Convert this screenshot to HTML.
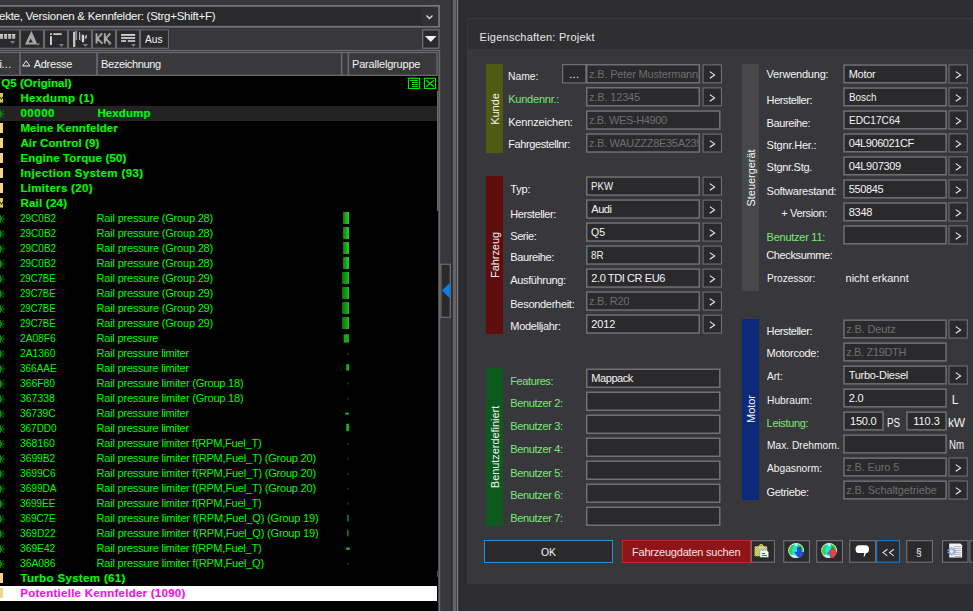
<!DOCTYPE html>
<html><head><meta charset="utf-8"><title>Eigenschaften: Projekt</title>
<style>
html,body{margin:0;padding:0}
body{width:973px;height:611px;position:relative;overflow:hidden;background:#2d2d30;font-family:"Liberation Sans",sans-serif;font-size:11px}
.a{position:absolute;white-space:nowrap}
.t{pointer-events:none}
svg{position:absolute;overflow:visible}
</style></head><body>

<div class="a" style="left:0px;top:0px;width:453px;height:611px;background:#38383c;"></div>
<svg class="a" style="left:0;top:0" width="973" height="611" viewBox="0 0 973 611"><rect x="451" y="0" width="1.8" height="611" fill="#2c2c2e"/><rect x="452.8" y="0" width="3.3" height="611" fill="#636365"/><rect x="456.1" y="0" width="0.7" height="611" fill="#3c3c3e"/><rect x="456.8" y="0" width="1.6" height="611" fill="#7a7a7c"/><rect x="458.4" y="0" width="9" height="611" fill="#2d2d30"/></svg>
<svg class="a" style="left:0;top:0" width="973" height="611" viewBox="0 0 973 611"><rect x="-2.10" y="5.90" width="441.20" height="20.80" fill="#2a2a2c" stroke="#747476" stroke-width="1.8"/></svg>
<div class="a" style="left:421px;top:7px;width:17px;height:19px;background:#303033;"></div>
<div class="a t" style="left:-1.0px;top:8px;color:#f4f4f4;font-size:11.5px;line-height:16px;letter-spacing:-0.258px;">ekte, Versionen &amp; Kennfelder: (Strg+Shift+F)</div>
<svg class="a" style="left:425px;top:13.7px" width="10" height="7"><path d="M1.5 1.5 L4.5 4.5 L7.5 1.5" stroke="#e0e0e0" stroke-width="1.3" fill="none"/></svg>
<svg class="a" style="left:0;top:0" width="973" height="611" viewBox="0 0 973 611"><rect x="-3.45" y="29.85" width="22.90" height="18.40" fill="#2a2a2c" stroke="#6a6a6c" stroke-width="1.1"/><rect x="20.55" y="29.85" width="22.90" height="18.40" fill="#2a2a2c" stroke="#6a6a6c" stroke-width="1.1"/><rect x="44.55" y="29.85" width="22.90" height="18.40" fill="#2a2a2c" stroke="#6a6a6c" stroke-width="1.1"/><rect x="68.55" y="29.85" width="22.90" height="18.40" fill="#2a2a2c" stroke="#6a6a6c" stroke-width="1.1"/><rect x="92.55" y="29.85" width="22.90" height="18.40" fill="#2a2a2c" stroke="#6a6a6c" stroke-width="1.1"/><rect x="116.55" y="29.85" width="22.90" height="18.40" fill="#2a2a2c" stroke="#6a6a6c" stroke-width="1.1"/><rect x="140.55" y="29.85" width="27.90" height="18.40" fill="#2a2a2c" stroke="#6a6a6c" stroke-width="1.1"/></svg>
<svg class="a" style="left:0;top:0" width="200" height="60"><rect x="0" y="34" width="3" height="4.8" fill="#b8b8b8"/><rect x="0" y="34" width="3" height="1.1" fill="#d6d6d6"/><rect x="4.1" y="34" width="3" height="4.8" fill="#b8b8b8"/><rect x="4.1" y="34" width="3" height="1.1" fill="#d6d6d6"/><rect x="8.2" y="34" width="3" height="4.8" fill="#b8b8b8"/><rect x="8.2" y="34" width="3" height="1.1" fill="#d6d6d6"/><rect x="12.2" y="34" width="3" height="4.8" fill="#b8b8b8"/><rect x="12.2" y="34" width="3" height="1.1" fill="#d6d6d6"/><path d="M10 41 H15.2 L12.6 44 Z" fill="#7c7c7e"/><path fill-rule="evenodd" d="M31.4 30.8 L37.4 44.6 H25 Z M30.6 38.6 L32.9 42.5 H28.5 Z" fill="#a8a8a8"/><path d="M36.2 43.2 H40 L38.1 46 Z" fill="#7c7c7e"/><rect x="50" y="33.3" width="1.9" height="1.6" fill="#d6d6d6"/><rect x="50" y="36.2" width="1.9" height="8.7" fill="#d6d6d6"/><rect x="53.3" y="33.3" width="8.5" height="1.6" fill="#d6d6d6"/><path d="M58.8 44 H64 L61.4 47 Z" fill="#7c7c7e"/><rect x="73" y="31.8" width="2.3" height="15.2" fill="#c4c4c4"/><rect x="75.3" y="31" width="1.8" height="9" fill="#8e8e90"/><rect x="79" y="32.2" width="1.1" height="7.8" fill="#b8b8b8"/><rect x="82" y="34.8" width="2.1" height="7.4" fill="#d6d6d6"/><path d="M80.2 33 L82 35 V42 L80.2 40 Z" fill="#555558"/><path d="M84.9 36.2 L87 34.6 V37.6 L84.9 39.4 Z" fill="#b8b8b8"/><path d="M82.6 44 H88.2 L85.4 47 Z" fill="#7c7c7e"/><path d="M96.5 33.3 V43.6 M102 33.3 L97.4 38.6 L102.5 43.6 M104.8 33.3 V43.6 M110.3 33.3 L105.7 38.6 L110.8 43.6" stroke="#a8a8a8" stroke-width="1.9" fill="none" stroke-linejoin="miter"/><path d="M107.4 43 H112 L109.7 45.6 Z" fill="#7c7c7e"/><rect x="121.1" y="34" width="14.1" height="1.8" fill="#d6d6d6"/><rect x="121.1" y="37.1" width="14.1" height="1.7" fill="#d6d6d6"/><rect x="121.1" y="40.2" width="4.9" height="1.6" fill="#d6d6d6"/><rect x="127.8" y="40.2" width="7.4" height="1.6" fill="#d6d6d6"/><path d="M130.8 44 H136 L133.4 47 Z" fill="#7c7c7e"/></svg>
<div class="a t" style="left:145.3px;top:31px;color:#f4f4f4;font-size:11px;line-height:16px;transform:scaleX(0.923);transform-origin:0 0;">Aus</div>
<svg class="a" style="left:0;top:0" width="973" height="611" viewBox="0 0 973 611"><rect x="422.70" y="29.90" width="16.30" height="18.30" fill="#2a2a2c" stroke="#747476" stroke-width="1.2"/></svg>
<svg class="a" style="left:424.9px;top:36px" width="12" height="7"><path d="M0 0 L11.5 0 L5.75 6.1 Z" fill="#f0f0f0"/></svg>
<svg class="a" style="left:0;top:0" width="973" height="611" viewBox="0 0 973 611"><rect x="-3" y="49.9" width="443.3" height="1.2" fill="#6e6e70"/><rect x="438.6" y="50.2" width="1.6" height="561" fill="#6a6a6c"/><rect x="-3" y="51.9" width="440.7" height="24" fill="#6c6c6e"/><rect x="-3" y="53.1" width="22.2" height="21.6" fill="#39393c"/><rect x="20.8" y="53.1" width="75.4" height="21.6" fill="#39393c"/><rect x="97.8" y="53.1" width="243" height="21.6" fill="#39393c"/><rect x="342.4" y="53.1" width="5.2" height="21.6" fill="#39393c"/><rect x="349.2" y="53.1" width="87.2" height="21.6" fill="#39393c"/></svg>
<div class="a t" style="left:-0.6px;top:56px;color:#f4f4f4;font-size:11px;line-height:16px;">i</div>
<div class="a t" style="left:1.4px;top:56px;color:#f4f4f4;font-size:11px;line-height:16px;letter-spacing:0.4px;">...</div>
<div class="a t" style="left:33.7px;top:56px;color:#f4f4f4;font-size:11px;line-height:16px;letter-spacing:-0.26px;">Adresse</div>
<div class="a t" style="left:101px;top:56px;color:#f4f4f4;font-size:11px;line-height:16px;letter-spacing:-0.341px;">Bezeichnung</div>
<div class="a t" style="left:352px;top:56px;color:#f4f4f4;font-size:11px;line-height:16px;letter-spacing:-0.188px;">Parallelgruppe</div>
<svg class="a" style="left:22px;top:60px" width="9" height="7"><path d="M4.2 0.8 L7.8 6 L0.6 6 Z" stroke="#f0f0f0" stroke-width="1" fill="none"/></svg>
<div class="a" style="left:0px;top:76px;width:438px;height:535px;background:#000;"></div>
<svg class="a" style="left:0;top:0" width="973" height="611" viewBox="0 0 973 611"><rect x="437" y="90.7" width="1.2" height="120.3" fill="#6e6e70"/><rect x="437" y="570.8" width="1.3" height="6.2" fill="#48484c"/></svg>
<div class="a t" style="left:1.2px;top:75px;color:#00fa00;font-size:11.5px;line-height:16px;font-weight:bold;-webkit-text-stroke:0.15px #00fa00;letter-spacing:0.07px;">Q5 (Original)</div>
<div class="a t" style="left:20.4px;top:90px;color:#00fa00;font-size:11.5px;line-height:16px;font-weight:bold;-webkit-text-stroke:0.15px #00fa00;letter-spacing:0.374px;">Hexdump (1)</div>
<svg class="a" style="left:0;top:93.3px" width="4" height="10"><rect x="0" y="0" width="3" height="9.6" fill="#dcc850"/><path d="M0 4 L1.5 6.5 L3 3.5" stroke="#222" stroke-width="1" fill="none"/></svg>
<div class="a" style="left:0px;top:106px;width:437px;height:14.7px;background:#232323;"></div>
<div class="a t" style="left:20.4px;top:105px;color:#00fa00;font-size:11.5px;line-height:16px;font-weight:bold;-webkit-text-stroke:0.15px #00fa00;letter-spacing:0.529px;">00000</div>
<div class="a t" style="left:97.4px;top:105px;color:#00fa00;font-size:11.5px;line-height:16px;font-weight:bold;-webkit-text-stroke:0.15px #00fa00;letter-spacing:0.116px;">Hexdump</div>
<svg class="a" style="left:0;top:109px" width="5" height="10"><path d="M0 5 H4.8 M0.5 5 L3.7 1.3 M0.5 5 L3.7 8.7 M0.4 1 V9" stroke="#128412" stroke-width="1" fill="none"/><rect x="0" y="3" width="1.6" height="4" fill="#128412"/></svg>
<div class="a t" style="left:20.4px;top:120px;color:#00fa00;font-size:11.5px;line-height:16px;font-weight:bold;-webkit-text-stroke:0.15px #00fa00;letter-spacing:0.103px;">Meine Kennfelder</div>
<div class="a" style="left:0px;top:123.3px;width:3px;height:9.6px;background:#f2d488;"></div>
<div class="a t" style="left:20.4px;top:135px;color:#00fa00;font-size:11.5px;line-height:16px;font-weight:bold;-webkit-text-stroke:0.15px #00fa00;letter-spacing:0.121px;">Air Control (9)</div>
<div class="a" style="left:0px;top:138.3px;width:3px;height:9.6px;background:#f2d488;"></div>
<div class="a t" style="left:20.4px;top:150px;color:#00fa00;font-size:11.5px;line-height:16px;font-weight:bold;-webkit-text-stroke:0.15px #00fa00;letter-spacing:0.159px;">Engine Torque (50)</div>
<div class="a" style="left:0px;top:153.3px;width:3px;height:9.6px;background:#f2d488;"></div>
<div class="a t" style="left:20.4px;top:165px;color:#00fa00;font-size:11.5px;line-height:16px;font-weight:bold;-webkit-text-stroke:0.15px #00fa00;letter-spacing:0.383px;">Injection System (93)</div>
<div class="a" style="left:0px;top:168.3px;width:3px;height:9.6px;background:#f2d488;"></div>
<div class="a t" style="left:20.4px;top:180px;color:#00fa00;font-size:11.5px;line-height:16px;font-weight:bold;-webkit-text-stroke:0.15px #00fa00;letter-spacing:0.309px;">Limiters (20)</div>
<div class="a" style="left:0px;top:183.3px;width:3px;height:9.6px;background:#f2d488;"></div>
<div class="a t" style="left:20.4px;top:195px;color:#00fa00;font-size:11.5px;line-height:16px;font-weight:bold;-webkit-text-stroke:0.15px #00fa00;letter-spacing:0.231px;">Rail (24)</div>
<svg class="a" style="left:0;top:198.3px" width="4" height="10"><rect x="0" y="0" width="3" height="9.6" fill="#dcc850"/><path d="M0 4 L1.5 6.5 L3 3.5" stroke="#222" stroke-width="1" fill="none"/></svg>
<div class="a t" style="left:20.4px;top:210px;color:#00fa00;font-size:11px;line-height:16px;transform:scaleX(0.908);transform-origin:0 0;">29C0B2</div>
<div class="a t" style="left:96.6px;top:210px;color:#00fa00;font-size:11px;line-height:16px;letter-spacing:-0.194px;">Rail pressure (Group 28)</div>
<svg class="a" style="left:0;top:214px" width="5" height="10"><path d="M0 5 H4.8 M0.5 5 L3.7 1.3 M0.5 5 L3.7 8.7 M0.4 1 V9" stroke="#128412" stroke-width="1" fill="none"/><rect x="0" y="3" width="1.6" height="4" fill="#128412"/></svg>
<div class="a t" style="left:20.4px;top:225px;color:#00fa00;font-size:11px;line-height:16px;transform:scaleX(0.908);transform-origin:0 0;">29C0B2</div>
<div class="a t" style="left:96.6px;top:225px;color:#00fa00;font-size:11px;line-height:16px;letter-spacing:-0.194px;">Rail pressure (Group 28)</div>
<svg class="a" style="left:0;top:229px" width="5" height="10"><path d="M0 5 H4.8 M0.5 5 L3.7 1.3 M0.5 5 L3.7 8.7 M0.4 1 V9" stroke="#128412" stroke-width="1" fill="none"/><rect x="0" y="3" width="1.6" height="4" fill="#128412"/></svg>
<div class="a t" style="left:20.4px;top:240px;color:#00fa00;font-size:11px;line-height:16px;transform:scaleX(0.908);transform-origin:0 0;">29C0B2</div>
<div class="a t" style="left:96.6px;top:240px;color:#00fa00;font-size:11px;line-height:16px;letter-spacing:-0.194px;">Rail pressure (Group 28)</div>
<svg class="a" style="left:0;top:244px" width="5" height="10"><path d="M0 5 H4.8 M0.5 5 L3.7 1.3 M0.5 5 L3.7 8.7 M0.4 1 V9" stroke="#128412" stroke-width="1" fill="none"/><rect x="0" y="3" width="1.6" height="4" fill="#128412"/></svg>
<div class="a t" style="left:20.4px;top:255px;color:#00fa00;font-size:11px;line-height:16px;transform:scaleX(0.908);transform-origin:0 0;">29C0B2</div>
<div class="a t" style="left:96.6px;top:255px;color:#00fa00;font-size:11px;line-height:16px;letter-spacing:-0.194px;">Rail pressure (Group 28)</div>
<svg class="a" style="left:0;top:259px" width="5" height="10"><path d="M0 5 H4.8 M0.5 5 L3.7 1.3 M0.5 5 L3.7 8.7 M0.4 1 V9" stroke="#128412" stroke-width="1" fill="none"/><rect x="0" y="3" width="1.6" height="4" fill="#128412"/></svg>
<div class="a t" style="left:20.4px;top:270px;color:#00fa00;font-size:11px;line-height:16px;transform:scaleX(0.869);transform-origin:0 0;">29C7BE</div>
<div class="a t" style="left:96.6px;top:270px;color:#00fa00;font-size:11px;line-height:16px;letter-spacing:-0.194px;">Rail pressure (Group 29)</div>
<svg class="a" style="left:0;top:274px" width="5" height="10"><path d="M0 5 H4.8 M0.5 5 L3.7 1.3 M0.5 5 L3.7 8.7 M0.4 1 V9" stroke="#128412" stroke-width="1" fill="none"/><rect x="0" y="3" width="1.6" height="4" fill="#128412"/></svg>
<div class="a t" style="left:20.4px;top:285px;color:#00fa00;font-size:11px;line-height:16px;transform:scaleX(0.869);transform-origin:0 0;">29C7BE</div>
<div class="a t" style="left:96.6px;top:285px;color:#00fa00;font-size:11px;line-height:16px;letter-spacing:-0.194px;">Rail pressure (Group 29)</div>
<svg class="a" style="left:0;top:289px" width="5" height="10"><path d="M0 5 H4.8 M0.5 5 L3.7 1.3 M0.5 5 L3.7 8.7 M0.4 1 V9" stroke="#128412" stroke-width="1" fill="none"/><rect x="0" y="3" width="1.6" height="4" fill="#128412"/></svg>
<div class="a t" style="left:20.4px;top:300px;color:#00fa00;font-size:11px;line-height:16px;transform:scaleX(0.869);transform-origin:0 0;">29C7BE</div>
<div class="a t" style="left:96.6px;top:300px;color:#00fa00;font-size:11px;line-height:16px;letter-spacing:-0.194px;">Rail pressure (Group 29)</div>
<svg class="a" style="left:0;top:304px" width="5" height="10"><path d="M0 5 H4.8 M0.5 5 L3.7 1.3 M0.5 5 L3.7 8.7 M0.4 1 V9" stroke="#128412" stroke-width="1" fill="none"/><rect x="0" y="3" width="1.6" height="4" fill="#128412"/></svg>
<div class="a t" style="left:20.4px;top:315px;color:#00fa00;font-size:11px;line-height:16px;transform:scaleX(0.869);transform-origin:0 0;">29C7BE</div>
<div class="a t" style="left:96.6px;top:315px;color:#00fa00;font-size:11px;line-height:16px;letter-spacing:-0.194px;">Rail pressure (Group 29)</div>
<svg class="a" style="left:0;top:319px" width="5" height="10"><path d="M0 5 H4.8 M0.5 5 L3.7 1.3 M0.5 5 L3.7 8.7 M0.4 1 V9" stroke="#128412" stroke-width="1" fill="none"/><rect x="0" y="3" width="1.6" height="4" fill="#128412"/></svg>
<div class="a t" style="left:20.4px;top:330px;color:#00fa00;font-size:11px;line-height:16px;transform:scaleX(0.924);transform-origin:0 0;">2A08F6</div>
<div class="a t" style="left:96.6px;top:330px;color:#00fa00;font-size:11px;line-height:16px;letter-spacing:-0.243px;">Rail pressure</div>
<svg class="a" style="left:0;top:334px" width="5" height="10"><path d="M0 5 H4.8 M0.5 5 L3.7 1.3 M0.5 5 L3.7 8.7 M0.4 1 V9" stroke="#128412" stroke-width="1" fill="none"/><rect x="0" y="3" width="1.6" height="4" fill="#128412"/></svg>
<div class="a t" style="left:20.4px;top:345px;color:#00fa00;font-size:11px;line-height:16px;transform:scaleX(0.938);transform-origin:0 0;">2A1360</div>
<div class="a t" style="left:96.6px;top:345px;color:#00fa00;font-size:11px;line-height:16px;letter-spacing:-0.235px;">Rail pressure limiter</div>
<svg class="a" style="left:0;top:349px" width="5" height="10"><path d="M0 5 H4.8 M0.5 5 L3.7 1.3 M0.5 5 L3.7 8.7 M0.4 1 V9" stroke="#128412" stroke-width="1" fill="none"/><rect x="0" y="3" width="1.6" height="4" fill="#128412"/></svg>
<div class="a t" style="left:20.4px;top:360px;color:#00fa00;font-size:11px;line-height:16px;transform:scaleX(0.907);transform-origin:0 0;">366AAE</div>
<div class="a t" style="left:96.6px;top:360px;color:#00fa00;font-size:11px;line-height:16px;letter-spacing:-0.235px;">Rail pressure limiter</div>
<svg class="a" style="left:0;top:364px" width="5" height="10"><path d="M0 5 H4.8 M0.5 5 L3.7 1.3 M0.5 5 L3.7 8.7 M0.4 1 V9" stroke="#128412" stroke-width="1" fill="none"/><rect x="0" y="3" width="1.6" height="4" fill="#128412"/></svg>
<div class="a t" style="left:20.4px;top:375px;color:#00fa00;font-size:11px;line-height:16px;transform:scaleX(0.935);transform-origin:0 0;">366F80</div>
<div class="a t" style="left:96.6px;top:375px;color:#00fa00;font-size:11px;line-height:16px;letter-spacing:-0.208px;">Rail pressure limiter (Group 18)</div>
<svg class="a" style="left:0;top:379px" width="5" height="10"><path d="M0 5 H4.8 M0.5 5 L3.7 1.3 M0.5 5 L3.7 8.7 M0.4 1 V9" stroke="#128412" stroke-width="1" fill="none"/><rect x="0" y="3" width="1.6" height="4" fill="#128412"/></svg>
<div class="a t" style="left:20.4px;top:390px;color:#00fa00;font-size:11px;line-height:16px;transform:scaleX(0.950);transform-origin:0 0;">367338</div>
<div class="a t" style="left:96.6px;top:390px;color:#00fa00;font-size:11px;line-height:16px;letter-spacing:-0.208px;">Rail pressure limiter (Group 18)</div>
<svg class="a" style="left:0;top:394px" width="5" height="10"><path d="M0 5 H4.8 M0.5 5 L3.7 1.3 M0.5 5 L3.7 8.7 M0.4 1 V9" stroke="#128412" stroke-width="1" fill="none"/><rect x="0" y="3" width="1.6" height="4" fill="#128412"/></svg>
<div class="a t" style="left:20.4px;top:405px;color:#00fa00;font-size:11px;line-height:16px;transform:scaleX(0.924);transform-origin:0 0;">36739C</div>
<div class="a t" style="left:96.6px;top:405px;color:#00fa00;font-size:11px;line-height:16px;letter-spacing:-0.235px;">Rail pressure limiter</div>
<svg class="a" style="left:0;top:409px" width="5" height="10"><path d="M0 5 H4.8 M0.5 5 L3.7 1.3 M0.5 5 L3.7 8.7 M0.4 1 V9" stroke="#128412" stroke-width="1" fill="none"/><rect x="0" y="3" width="1.6" height="4" fill="#128412"/></svg>
<div class="a t" style="left:20.4px;top:420px;color:#00fa00;font-size:11px;line-height:16px;transform:scaleX(0.907);transform-origin:0 0;">367DD0</div>
<div class="a t" style="left:96.6px;top:420px;color:#00fa00;font-size:11px;line-height:16px;letter-spacing:-0.235px;">Rail pressure limiter</div>
<svg class="a" style="left:0;top:424px" width="5" height="10"><path d="M0 5 H4.8 M0.5 5 L3.7 1.3 M0.5 5 L3.7 8.7 M0.4 1 V9" stroke="#128412" stroke-width="1" fill="none"/><rect x="0" y="3" width="1.6" height="4" fill="#128412"/></svg>
<div class="a t" style="left:20.4px;top:435px;color:#00fa00;font-size:11px;line-height:16px;transform:scaleX(0.950);transform-origin:0 0;">368160</div>
<div class="a t" style="left:96.6px;top:435px;color:#00fa00;font-size:11px;line-height:16px;letter-spacing:-0.217px;">Rail pressure limiter f(RPM,Fuel_T)</div>
<svg class="a" style="left:0;top:439px" width="5" height="10"><path d="M0 5 H4.8 M0.5 5 L3.7 1.3 M0.5 5 L3.7 8.7 M0.4 1 V9" stroke="#128412" stroke-width="1" fill="none"/><rect x="0" y="3" width="1.6" height="4" fill="#128412"/></svg>
<div class="a t" style="left:20.4px;top:450px;color:#00fa00;font-size:11px;line-height:16px;transform:scaleX(0.930);transform-origin:0 0;">3699B2</div>
<div class="a t" style="left:96.6px;top:450px;color:#00fa00;font-size:11px;line-height:16px;letter-spacing:-0.203px;">Rail pressure limiter f(RPM,Fuel_T) (Group 20)</div>
<svg class="a" style="left:0;top:454px" width="5" height="10"><path d="M0 5 H4.8 M0.5 5 L3.7 1.3 M0.5 5 L3.7 8.7 M0.4 1 V9" stroke="#128412" stroke-width="1" fill="none"/><rect x="0" y="3" width="1.6" height="4" fill="#128412"/></svg>
<div class="a t" style="left:20.4px;top:465px;color:#00fa00;font-size:11px;line-height:16px;transform:scaleX(0.924);transform-origin:0 0;">3699C6</div>
<div class="a t" style="left:96.6px;top:465px;color:#00fa00;font-size:11px;line-height:16px;letter-spacing:-0.203px;">Rail pressure limiter f(RPM,Fuel_T) (Group 20)</div>
<svg class="a" style="left:0;top:469px" width="5" height="10"><path d="M0 5 H4.8 M0.5 5 L3.7 1.3 M0.5 5 L3.7 8.7 M0.4 1 V9" stroke="#128412" stroke-width="1" fill="none"/><rect x="0" y="3" width="1.6" height="4" fill="#128412"/></svg>
<div class="a t" style="left:20.4px;top:480px;color:#00fa00;font-size:11px;line-height:16px;transform:scaleX(0.920);transform-origin:0 0;">3699DA</div>
<div class="a t" style="left:96.6px;top:480px;color:#00fa00;font-size:11px;line-height:16px;letter-spacing:-0.203px;">Rail pressure limiter f(RPM,Fuel_T) (Group 20)</div>
<svg class="a" style="left:0;top:484px" width="5" height="10"><path d="M0 5 H4.8 M0.5 5 L3.7 1.3 M0.5 5 L3.7 8.7 M0.4 1 V9" stroke="#128412" stroke-width="1" fill="none"/><rect x="0" y="3" width="1.6" height="4" fill="#128412"/></svg>
<div class="a t" style="left:20.4px;top:495px;color:#00fa00;font-size:11px;line-height:16px;transform:scaleX(0.902);transform-origin:0 0;">3699EE</div>
<div class="a t" style="left:96.6px;top:495px;color:#00fa00;font-size:11px;line-height:16px;letter-spacing:-0.217px;">Rail pressure limiter f(RPM,Fuel_T)</div>
<svg class="a" style="left:0;top:499px" width="5" height="10"><path d="M0 5 H4.8 M0.5 5 L3.7 1.3 M0.5 5 L3.7 8.7 M0.4 1 V9" stroke="#128412" stroke-width="1" fill="none"/><rect x="0" y="3" width="1.6" height="4" fill="#128412"/></svg>
<div class="a t" style="left:20.4px;top:510px;color:#00fa00;font-size:11px;line-height:16px;transform:scaleX(0.895);transform-origin:0 0;">369C7E</div>
<div class="a t" style="left:96.6px;top:510px;color:#00fa00;font-size:11px;line-height:16px;letter-spacing:-0.188px;">Rail pressure limiter f(RPM,Fuel_Q) (Group 19)</div>
<svg class="a" style="left:0;top:514px" width="5" height="10"><path d="M0 5 H4.8 M0.5 5 L3.7 1.3 M0.5 5 L3.7 8.7 M0.4 1 V9" stroke="#128412" stroke-width="1" fill="none"/><rect x="0" y="3" width="1.6" height="4" fill="#128412"/></svg>
<div class="a t" style="left:20.4px;top:525px;color:#00fa00;font-size:11px;line-height:16px;transform:scaleX(0.924);transform-origin:0 0;">369D22</div>
<div class="a t" style="left:96.6px;top:525px;color:#00fa00;font-size:11px;line-height:16px;letter-spacing:-0.188px;">Rail pressure limiter f(RPM,Fuel_Q) (Group 19)</div>
<svg class="a" style="left:0;top:529px" width="5" height="10"><path d="M0 5 H4.8 M0.5 5 L3.7 1.3 M0.5 5 L3.7 8.7 M0.4 1 V9" stroke="#128412" stroke-width="1" fill="none"/><rect x="0" y="3" width="1.6" height="4" fill="#128412"/></svg>
<div class="a t" style="left:20.4px;top:540px;color:#00fa00;font-size:11px;line-height:16px;transform:scaleX(0.930);transform-origin:0 0;">369E42</div>
<div class="a t" style="left:96.6px;top:540px;color:#00fa00;font-size:11px;line-height:16px;letter-spacing:-0.217px;">Rail pressure limiter f(RPM,Fuel_T)</div>
<svg class="a" style="left:0;top:544px" width="5" height="10"><path d="M0 5 H4.8 M0.5 5 L3.7 1.3 M0.5 5 L3.7 8.7 M0.4 1 V9" stroke="#128412" stroke-width="1" fill="none"/><rect x="0" y="3" width="1.6" height="4" fill="#128412"/></svg>
<div class="a t" style="left:20.4px;top:555px;color:#00fa00;font-size:11px;line-height:16px;transform:scaleX(0.938);transform-origin:0 0;">36A086</div>
<div class="a t" style="left:96.6px;top:555px;color:#00fa00;font-size:11px;line-height:16px;letter-spacing:-0.197px;">Rail pressure limiter f(RPM,Fuel_Q)</div>
<svg class="a" style="left:0;top:559px" width="5" height="10"><path d="M0 5 H4.8 M0.5 5 L3.7 1.3 M0.5 5 L3.7 8.7 M0.4 1 V9" stroke="#128412" stroke-width="1" fill="none"/><rect x="0" y="3" width="1.6" height="4" fill="#128412"/></svg>
<div class="a t" style="left:20.4px;top:570px;color:#00fa00;font-size:11.5px;line-height:16px;font-weight:bold;-webkit-text-stroke:0.15px #00fa00;letter-spacing:0.345px;">Turbo System (61)</div>
<div class="a" style="left:0px;top:573.3px;width:3px;height:9.6px;background:#f2d488;"></div>
<div class="a" style="left:0px;top:586px;width:437px;height:14.8px;background:#ffffff;"></div>
<div class="a t" style="left:20.3px;top:585px;color:#fa0cf0;font-size:11.5px;line-height:16px;font-weight:bold;-webkit-text-stroke:0.15px #fa0cf0;letter-spacing:0.255px;">Potentielle Kennfelder (1090)</div>
<div class="a" style="left:0px;top:588.3px;width:3px;height:9.6px;background:#f2d488;"></div>
<svg class="a" style="left:0;top:0" width="440" height="92"><rect x="408.5" y="78.3" width="11.1" height="10.2" fill="none" stroke="#00ea00" stroke-width="1.1"/><path d="M409.9 80.55 H418 M412 82.55 H418 M412 84.5 H418 M412 86.45 H418" stroke="#00ea00" stroke-width="1"/><rect x="424.45" y="78.3" width="11.1" height="10.2" fill="none" stroke="#00ea00" stroke-width="1.1"/><path d="M426.2 80.3 L433.9 86.7 M433.9 80.3 L426.2 86.7" stroke="#00ea00" stroke-width="1.3"/></svg>
<div class="a" style="left:343px;top:212px;width:6px;height:12px;background:linear-gradient(to right,#0c7c0c,#22d422);"></div>
<div class="a" style="left:343px;top:227px;width:6px;height:12px;background:linear-gradient(to right,#0c7c0c,#22d422);"></div>
<div class="a" style="left:343px;top:242px;width:6px;height:12px;background:linear-gradient(to right,#0c7c0c,#22d422);"></div>
<div class="a" style="left:343px;top:257px;width:6px;height:12px;background:linear-gradient(to right,#0c7c0c,#22d422);"></div>
<div class="a" style="left:341.8px;top:272px;width:7.2px;height:12px;background:linear-gradient(to right,#0a6c0a,#1cbc1c);"></div>
<div class="a" style="left:341.8px;top:287px;width:7.2px;height:12px;background:linear-gradient(to right,#0a6c0a,#1cbc1c);"></div>
<div class="a" style="left:341.8px;top:302px;width:7.2px;height:12px;background:linear-gradient(to right,#0a6c0a,#1cbc1c);"></div>
<div class="a" style="left:341.8px;top:317px;width:7.2px;height:12px;background:linear-gradient(to right,#0a6c0a,#1cbc1c);"></div>
<svg class="a" style="left:0;top:0" width="973" height="611" viewBox="0 0 973 611"><rect x="343.7" y="334.3" width="5.3" height="8.3" fill="#17a817"/><rect x="347.4" y="353" width="1" height="2" fill="#1ec81e" opacity="0.55"/><rect x="346.2" y="364.3" width="3" height="6.3" fill="#1ec81e" opacity="0.85"/><rect x="347.4" y="382.4" width="1" height="2" fill="#1ec81e" opacity="0.55"/><rect x="347.4" y="397.7" width="1" height="2" fill="#1ec81e" opacity="0.55"/><rect x="345" y="412.7" width="4.2" height="1.9" fill="#1ec81e" opacity="0.85"/><rect x="346.2" y="423.7" width="3" height="7.4" fill="#1ec81e" opacity="0.85"/><rect x="347.4" y="443" width="1" height="2" fill="#1ec81e" opacity="0.55"/><rect x="347.4" y="457.8" width="1" height="2" fill="#1ec81e" opacity="0.55"/><rect x="347.4" y="472.8" width="1" height="2" fill="#1ec81e" opacity="0.55"/><rect x="347.4" y="487.7" width="1" height="2" fill="#1ec81e" opacity="0.55"/><rect x="347.4" y="502.6" width="1" height="2" fill="#1ec81e" opacity="0.55"/><rect x="347.3" y="514.8" width="1.2" height="6.7" fill="#1ec81e" opacity="0.85"/><rect x="347.3" y="529.7" width="1.2" height="6.7" fill="#1ec81e" opacity="0.85"/><rect x="346.2" y="547.4" width="3.5" height="2.6" fill="#1ec81e" opacity="0.85"/><rect x="347.4" y="562.7" width="1" height="2" fill="#1ec81e" opacity="0.55"/></svg>
<svg class="a" style="left:0;top:0" width="973" height="611" viewBox="0 0 973 611"><rect x="440.95" y="264.25" width="9.30" height="53.00" fill="#2a2a2c" stroke="#747476" stroke-width="1.1"/></svg>
<svg class="a" style="left:0;top:0" width="460" height="320"><path d="M449.9 282.7 L449.9 298.3 L441.8 290.5 Z" fill="#0a80e6"/></svg>
<div class="a" style="left:467px;top:18px;width:506px;height:566px;background:#38383c;"></div>
<div class="a" style="left:467px;top:18px;width:506px;height:30.8px;background:#2f2f32;"></div>
<div class="a" style="left:467px;top:18px;width:506px;height:1px;background:#3a3a3e;"></div>
<div class="a" style="left:467px;top:18px;width:1px;height:565px;background:#38383c;"></div>
<div class="a t" style="left:479.6px;top:29px;color:#e8e8e8;font-size:11px;line-height:16px;letter-spacing:0.234px;">Eigenschaften: Projekt</div>
<div class="a" style="left:486px;top:64px;width:17px;height:89px;background:#505a12;"></div>
<div class="a t" style="left:494.5px;top:108.5px;width:0;height:0;"><div class="a" style="transform:translate(-50%,-50%) rotate(-90deg);color:#f4f4f4;font-size:11px;line-height:12px;letter-spacing:-0.05px;left:0.6px;top:0">Kunde</div></div>
<svg class="a" style="left:0;top:0" width="973" height="611" viewBox="0 0 973 611"><rect x="562.60" y="64.60" width="23.30" height="18.30" fill="#2a2a2c" stroke="#707072" stroke-width="1.2"/></svg>
<div class="a t" style="left:569.3px;top:66px;color:#f4f4f4;font-size:11px;line-height:16px;letter-spacing:0.25px;">...</div>
<svg class="a" style="left:0;top:0" width="973" height="611" viewBox="0 0 973 611"><rect x="586.75" y="64.75" width="112.50" height="18.00" fill="#2a2a2c" stroke="#707072" stroke-width="1.5"/></svg>
<div class="a t" style="left:589px;top:66px;color:#6e6e70;font-size:11px;line-height:16px;letter-spacing:-0.165px;max-width:109.4px;overflow:hidden;">z.B. Peter Mustermann</div>
<svg class="a" style="left:0;top:0" width="973" height="611" viewBox="0 0 973 611"><rect x="703.05" y="64.85" width="18.40" height="17.90" fill="#2a2a2c" stroke="#707072" stroke-width="1.1"/></svg>
<svg class="a" style="left:709.25px;top:70.5px" width="7" height="9"><path d="M0.8 0.6 L5.6 3.9 L0.8 7.2" stroke="#f0f0f0" stroke-width="1.1" fill="none"/></svg>
<svg class="a" style="left:0;top:0" width="973" height="611" viewBox="0 0 973 611"><rect x="586.75" y="87.75" width="112.50" height="18.00" fill="#2a2a2c" stroke="#707072" stroke-width="1.5"/></svg>
<div class="a t" style="left:589px;top:89px;color:#6e6e70;font-size:11px;line-height:16px;letter-spacing:-0.155px;max-width:109.4px;overflow:hidden;">z.B. 12345</div>
<svg class="a" style="left:0;top:0" width="973" height="611" viewBox="0 0 973 611"><rect x="703.05" y="87.85" width="18.40" height="17.90" fill="#2a2a2c" stroke="#707072" stroke-width="1.1"/></svg>
<svg class="a" style="left:709.25px;top:93.5px" width="7" height="9"><path d="M0.8 0.6 L5.6 3.9 L0.8 7.2" stroke="#f0f0f0" stroke-width="1.1" fill="none"/></svg>
<svg class="a" style="left:0;top:0" width="973" height="611" viewBox="0 0 973 611"><rect x="586.75" y="111.05" width="133.00" height="18.00" fill="#2a2a2c" stroke="#707072" stroke-width="1.5"/></svg>
<div class="a t" style="left:589px;top:112px;color:#6e6e70;font-size:11px;line-height:16px;letter-spacing:-0.38px;max-width:129.9px;overflow:hidden;">z.B. WES-H4900</div>
<svg class="a" style="left:0;top:0" width="973" height="611" viewBox="0 0 973 611"><rect x="586.75" y="134.05" width="112.50" height="18.00" fill="#2a2a2c" stroke="#707072" stroke-width="1.5"/></svg>
<div class="a t" style="left:589px;top:135px;color:#6e6e70;font-size:11px;line-height:16px;letter-spacing:-0.295px;max-width:109.4px;overflow:hidden;">z.B. WAUZZZ8E35A235</div>
<svg class="a" style="left:0;top:0" width="973" height="611" viewBox="0 0 973 611"><rect x="703.05" y="134.15" width="18.40" height="17.90" fill="#2a2a2c" stroke="#707072" stroke-width="1.1"/></svg>
<svg class="a" style="left:709.25px;top:139.79999999999998px" width="7" height="9"><path d="M0.8 0.6 L5.6 3.9 L0.8 7.2" stroke="#f0f0f0" stroke-width="1.1" fill="none"/></svg>
<div class="a t" style="left:508.2px;top:68px;color:#f4f4f4;font-size:11px;line-height:16px;transform:scaleX(0.941);transform-origin:0 0;">Name:</div>
<div class="a t" style="left:508.2px;top:91px;color:#76ea76;font-size:11px;line-height:16px;letter-spacing:-0.224px;">Kundennr.:</div>
<div class="a t" style="left:508.2px;top:114px;color:#f4f4f4;font-size:11px;line-height:16px;letter-spacing:-0.179px;">Kennzeichen:</div>
<div class="a t" style="left:508.2px;top:136px;color:#f4f4f4;font-size:11px;line-height:16px;letter-spacing:-0.39px;">Fahrgestellnr:</div>
<div class="a" style="left:486px;top:176px;width:17px;height:158px;background:#5e0c0e;"></div>
<div class="a t" style="left:494.5px;top:255.0px;width:0;height:0;"><div class="a" style="transform:translate(-50%,-50%) rotate(-90deg);color:#f4f4f4;font-size:11px;line-height:12px;letter-spacing:-0.05px;left:0.6px;top:0">Fahrzeug</div></div>
<svg class="a" style="left:0;top:0" width="973" height="611" viewBox="0 0 973 611"><rect x="586.75" y="177.05" width="112.50" height="18.00" fill="#2a2a2c" stroke="#707072" stroke-width="1.5"/></svg>
<div class="a t" style="left:591.3px;top:178px;color:#f4f4f4;font-size:11px;line-height:16px;transform:scaleX(0.878);transform-origin:0 0;">PKW</div>
<svg class="a" style="left:0;top:0" width="973" height="611" viewBox="0 0 973 611"><rect x="703.05" y="177.15" width="18.40" height="17.90" fill="#2a2a2c" stroke="#707072" stroke-width="1.1"/></svg>
<svg class="a" style="left:709.25px;top:182.8px" width="7" height="9"><path d="M0.8 0.6 L5.6 3.9 L0.8 7.2" stroke="#f0f0f0" stroke-width="1.1" fill="none"/></svg>
<div class="a t" style="left:510.3px;top:181px;color:#f4f4f4;font-size:11px;line-height:16px;letter-spacing:-0.199px;">Typ:</div>
<svg class="a" style="left:0;top:0" width="973" height="611" viewBox="0 0 973 611"><rect x="586.75" y="200.05" width="112.50" height="18.00" fill="#2a2a2c" stroke="#707072" stroke-width="1.5"/></svg>
<div class="a t" style="left:591.3px;top:201px;color:#f4f4f4;font-size:11px;line-height:16px;letter-spacing:-0.444px;">Audi</div>
<svg class="a" style="left:0;top:0" width="973" height="611" viewBox="0 0 973 611"><rect x="703.05" y="200.15" width="18.40" height="17.90" fill="#2a2a2c" stroke="#707072" stroke-width="1.1"/></svg>
<svg class="a" style="left:709.25px;top:205.8px" width="7" height="9"><path d="M0.8 0.6 L5.6 3.9 L0.8 7.2" stroke="#f0f0f0" stroke-width="1.1" fill="none"/></svg>
<div class="a t" style="left:510.3px;top:206px;color:#f4f4f4;font-size:11px;line-height:16px;letter-spacing:-0.412px;">Hersteller:</div>
<svg class="a" style="left:0;top:0" width="973" height="611" viewBox="0 0 973 611"><rect x="586.75" y="223.05" width="112.50" height="18.00" fill="#2a2a2c" stroke="#707072" stroke-width="1.5"/></svg>
<div class="a t" style="left:591.3px;top:224px;color:#f4f4f4;font-size:11px;line-height:16px;transform:scaleX(0.953);transform-origin:0 0;">Q5</div>
<svg class="a" style="left:0;top:0" width="973" height="611" viewBox="0 0 973 611"><rect x="703.05" y="223.15" width="18.40" height="17.90" fill="#2a2a2c" stroke="#707072" stroke-width="1.1"/></svg>
<svg class="a" style="left:709.25px;top:228.8px" width="7" height="9"><path d="M0.8 0.6 L5.6 3.9 L0.8 7.2" stroke="#f0f0f0" stroke-width="1.1" fill="none"/></svg>
<div class="a t" style="left:510.3px;top:228px;color:#f4f4f4;font-size:11px;line-height:16px;letter-spacing:-0.45px;">Serie:</div>
<svg class="a" style="left:0;top:0" width="973" height="611" viewBox="0 0 973 611"><rect x="586.75" y="246.05" width="112.50" height="18.00" fill="#2a2a2c" stroke="#707072" stroke-width="1.5"/></svg>
<div class="a t" style="left:591.3px;top:247px;color:#f4f4f4;font-size:11px;line-height:16px;transform:scaleX(0.889);transform-origin:0 0;">8R</div>
<svg class="a" style="left:0;top:0" width="973" height="611" viewBox="0 0 973 611"><rect x="703.05" y="246.15" width="18.40" height="17.90" fill="#2a2a2c" stroke="#707072" stroke-width="1.1"/></svg>
<svg class="a" style="left:709.25px;top:251.8px" width="7" height="9"><path d="M0.8 0.6 L5.6 3.9 L0.8 7.2" stroke="#f0f0f0" stroke-width="1.1" fill="none"/></svg>
<div class="a t" style="left:510.3px;top:249px;color:#f4f4f4;font-size:11px;line-height:16px;letter-spacing:-0.387px;">Baureihe:</div>
<svg class="a" style="left:0;top:0" width="973" height="611" viewBox="0 0 973 611"><rect x="586.75" y="269.05" width="112.50" height="18.00" fill="#2a2a2c" stroke="#707072" stroke-width="1.5"/></svg>
<div class="a t" style="left:591.3px;top:270px;color:#f4f4f4;font-size:11px;line-height:16px;letter-spacing:-0.406px;">2.0 TDI CR EU6</div>
<svg class="a" style="left:0;top:0" width="973" height="611" viewBox="0 0 973 611"><rect x="703.05" y="269.15" width="18.40" height="17.90" fill="#2a2a2c" stroke="#707072" stroke-width="1.1"/></svg>
<svg class="a" style="left:709.25px;top:274.8px" width="7" height="9"><path d="M0.8 0.6 L5.6 3.9 L0.8 7.2" stroke="#f0f0f0" stroke-width="1.1" fill="none"/></svg>
<div class="a t" style="left:510.3px;top:272px;color:#f4f4f4;font-size:11px;line-height:16px;letter-spacing:-0.363px;">Ausführung:</div>
<svg class="a" style="left:0;top:0" width="973" height="611" viewBox="0 0 973 611"><rect x="586.75" y="292.05" width="112.50" height="18.00" fill="#2a2a2c" stroke="#707072" stroke-width="1.5"/></svg>
<div class="a t" style="left:589px;top:293px;color:#6e6e70;font-size:11px;line-height:16px;letter-spacing:-0.241px;max-width:109.4px;overflow:hidden;">z.B. R20</div>
<svg class="a" style="left:0;top:0" width="973" height="611" viewBox="0 0 973 611"><rect x="703.05" y="292.15" width="18.40" height="17.90" fill="#2a2a2c" stroke="#707072" stroke-width="1.1"/></svg>
<svg class="a" style="left:709.25px;top:297.8px" width="7" height="9"><path d="M0.8 0.6 L5.6 3.9 L0.8 7.2" stroke="#f0f0f0" stroke-width="1.1" fill="none"/></svg>
<div class="a t" style="left:510.3px;top:296px;color:#f4f4f4;font-size:11px;line-height:16px;letter-spacing:-0.291px;">Besonderheit:</div>
<svg class="a" style="left:0;top:0" width="973" height="611" viewBox="0 0 973 611"><rect x="586.75" y="315.05" width="112.50" height="18.00" fill="#2a2a2c" stroke="#707072" stroke-width="1.5"/></svg>
<div class="a t" style="left:591.3px;top:316px;color:#f4f4f4;font-size:11px;line-height:16px;letter-spacing:-0.161px;">2012</div>
<svg class="a" style="left:0;top:0" width="973" height="611" viewBox="0 0 973 611"><rect x="703.05" y="315.15" width="18.40" height="17.90" fill="#2a2a2c" stroke="#707072" stroke-width="1.1"/></svg>
<svg class="a" style="left:709.25px;top:320.8px" width="7" height="9"><path d="M0.8 0.6 L5.6 3.9 L0.8 7.2" stroke="#f0f0f0" stroke-width="1.1" fill="none"/></svg>
<div class="a t" style="left:510.3px;top:318px;color:#f4f4f4;font-size:11px;line-height:16px;letter-spacing:-0.311px;">Modelljahr:</div>
<div class="a" style="left:486px;top:368.3px;width:17px;height:157.7px;background:#0e5a1e;"></div>
<div class="a t" style="left:494.5px;top:447.15px;width:0;height:0;"><div class="a" style="transform:translate(-50%,-50%) rotate(-90deg);color:#f4f4f4;font-size:11px;line-height:12px;letter-spacing:-0.05px;left:0.6px;top:0">Benutzerdefiniert</div></div>
<svg class="a" style="left:0;top:0" width="973" height="611" viewBox="0 0 973 611"><rect x="586.75" y="369.25" width="133.00" height="18.00" fill="#2a2a2c" stroke="#707072" stroke-width="1.5"/></svg>
<div class="a t" style="left:591.3px;top:370px;color:#f4f4f4;font-size:11px;line-height:16px;letter-spacing:-0.44px;">Mappack</div>
<div class="a t" style="left:510.3px;top:373px;color:#76ea76;font-size:11px;line-height:16px;letter-spacing:-0.409px;">Features:</div>
<svg class="a" style="left:0;top:0" width="973" height="611" viewBox="0 0 973 611"><rect x="586.75" y="392.25" width="133.00" height="18.00" fill="#2a2a2c" stroke="#707072" stroke-width="1.5"/></svg>
<div class="a t" style="left:510.3px;top:395px;color:#76ea76;font-size:11px;line-height:16px;letter-spacing:-0.357px;">Benutzer 2:</div>
<svg class="a" style="left:0;top:0" width="973" height="611" viewBox="0 0 973 611"><rect x="586.75" y="415.25" width="133.00" height="18.00" fill="#2a2a2c" stroke="#707072" stroke-width="1.5"/></svg>
<div class="a t" style="left:510.3px;top:418px;color:#76ea76;font-size:11px;line-height:16px;letter-spacing:-0.357px;">Benutzer 3:</div>
<svg class="a" style="left:0;top:0" width="973" height="611" viewBox="0 0 973 611"><rect x="586.75" y="438.25" width="133.00" height="18.00" fill="#2a2a2c" stroke="#707072" stroke-width="1.5"/></svg>
<div class="a t" style="left:510.3px;top:441px;color:#76ea76;font-size:11px;line-height:16px;letter-spacing:-0.357px;">Benutzer 4:</div>
<svg class="a" style="left:0;top:0" width="973" height="611" viewBox="0 0 973 611"><rect x="586.75" y="461.25" width="133.00" height="18.00" fill="#2a2a2c" stroke="#707072" stroke-width="1.5"/></svg>
<div class="a t" style="left:510.3px;top:465px;color:#76ea76;font-size:11px;line-height:16px;letter-spacing:-0.357px;">Benutzer 5:</div>
<svg class="a" style="left:0;top:0" width="973" height="611" viewBox="0 0 973 611"><rect x="586.75" y="484.25" width="133.00" height="18.00" fill="#2a2a2c" stroke="#707072" stroke-width="1.5"/></svg>
<div class="a t" style="left:510.3px;top:487px;color:#76ea76;font-size:11px;line-height:16px;letter-spacing:-0.357px;">Benutzer 6:</div>
<svg class="a" style="left:0;top:0" width="973" height="611" viewBox="0 0 973 611"><rect x="586.75" y="507.25" width="133.00" height="18.00" fill="#2a2a2c" stroke="#707072" stroke-width="1.5"/></svg>
<div class="a t" style="left:510.3px;top:510px;color:#76ea76;font-size:11px;line-height:16px;letter-spacing:-0.357px;">Benutzer 7:</div>
<div class="a" style="left:742px;top:64px;width:17.3px;height:227px;background:#48484b;"></div>
<div class="a t" style="left:750.65px;top:177.5px;width:0;height:0;"><div class="a" style="transform:translate(-50%,-50%) rotate(-90deg);color:#f4f4f4;font-size:11px;line-height:12px;letter-spacing:-0.05px;left:0.6px;top:0">Steuergerät</div></div>
<svg class="a" style="left:0;top:0" width="973" height="611" viewBox="0 0 973 611"><rect x="843.95" y="65.05" width="102.10" height="17.70" fill="#2a2a2c" stroke="#707072" stroke-width="1.5"/></svg>
<div class="a t" style="left:848.7px;top:66px;color:#f4f4f4;font-size:11px;line-height:16px;letter-spacing:-0.281px;">Motor</div>
<svg class="a" style="left:0;top:0" width="973" height="611" viewBox="0 0 973 611"><rect x="948.95" y="64.85" width="18.30" height="18.10" fill="#2a2a2c" stroke="#707072" stroke-width="1.1"/></svg>
<svg class="a" style="left:955.1px;top:70.6px" width="7" height="9"><path d="M0.8 0.6 L5.6 3.9 L0.8 7.2" stroke="#f0f0f0" stroke-width="1.1" fill="none"/></svg>
<div class="a t" style="left:766.6px;top:66px;color:#f4f4f4;font-size:11px;line-height:16px;letter-spacing:-0.222px;">Verwendung:</div>
<svg class="a" style="left:0;top:0" width="973" height="611" viewBox="0 0 973 611"><rect x="843.95" y="88.05" width="102.10" height="17.70" fill="#2a2a2c" stroke="#707072" stroke-width="1.5"/></svg>
<div class="a t" style="left:848.7px;top:89px;color:#f4f4f4;font-size:11px;line-height:16px;transform:scaleX(0.899);transform-origin:0 0;">Bosch</div>
<svg class="a" style="left:0;top:0" width="973" height="611" viewBox="0 0 973 611"><rect x="948.95" y="87.85" width="18.30" height="18.10" fill="#2a2a2c" stroke="#707072" stroke-width="1.1"/></svg>
<svg class="a" style="left:955.1px;top:93.6px" width="7" height="9"><path d="M0.8 0.6 L5.6 3.9 L0.8 7.2" stroke="#f0f0f0" stroke-width="1.1" fill="none"/></svg>
<div class="a t" style="left:766.6px;top:92px;color:#f4f4f4;font-size:11px;line-height:16px;letter-spacing:-0.412px;">Hersteller:</div>
<svg class="a" style="left:0;top:0" width="973" height="611" viewBox="0 0 973 611"><rect x="843.95" y="111.05" width="102.10" height="17.70" fill="#2a2a2c" stroke="#707072" stroke-width="1.5"/></svg>
<div class="a t" style="left:848.7px;top:112px;color:#f4f4f4;font-size:11px;line-height:16px;transform:scaleX(0.920);transform-origin:0 0;">EDC17C64</div>
<svg class="a" style="left:0;top:0" width="973" height="611" viewBox="0 0 973 611"><rect x="948.95" y="110.85" width="18.30" height="18.10" fill="#2a2a2c" stroke="#707072" stroke-width="1.1"/></svg>
<svg class="a" style="left:955.1px;top:116.6px" width="7" height="9"><path d="M0.8 0.6 L5.6 3.9 L0.8 7.2" stroke="#f0f0f0" stroke-width="1.1" fill="none"/></svg>
<div class="a t" style="left:766.6px;top:115px;color:#f4f4f4;font-size:11px;line-height:16px;letter-spacing:-0.387px;">Baureihe:</div>
<svg class="a" style="left:0;top:0" width="973" height="611" viewBox="0 0 973 611"><rect x="843.95" y="134.05" width="102.10" height="17.70" fill="#2a2a2c" stroke="#707072" stroke-width="1.5"/></svg>
<div class="a t" style="left:848.7px;top:135px;color:#f4f4f4;font-size:11px;line-height:16px;letter-spacing:-0.423px;">04L906021CF</div>
<svg class="a" style="left:0;top:0" width="973" height="611" viewBox="0 0 973 611"><rect x="948.95" y="133.85" width="18.30" height="18.10" fill="#2a2a2c" stroke="#707072" stroke-width="1.1"/></svg>
<svg class="a" style="left:955.1px;top:139.6px" width="7" height="9"><path d="M0.8 0.6 L5.6 3.9 L0.8 7.2" stroke="#f0f0f0" stroke-width="1.1" fill="none"/></svg>
<div class="a t" style="left:766.6px;top:137px;color:#f4f4f4;font-size:11px;line-height:16px;letter-spacing:-0.198px;">Stgnr.Her.:</div>
<svg class="a" style="left:0;top:0" width="973" height="611" viewBox="0 0 973 611"><rect x="843.95" y="157.05" width="102.10" height="17.70" fill="#2a2a2c" stroke="#707072" stroke-width="1.5"/></svg>
<div class="a t" style="left:848.7px;top:158px;color:#f4f4f4;font-size:11px;line-height:16px;letter-spacing:-0.32px;">04L907309</div>
<svg class="a" style="left:0;top:0" width="973" height="611" viewBox="0 0 973 611"><rect x="948.95" y="156.85" width="18.30" height="18.10" fill="#2a2a2c" stroke="#707072" stroke-width="1.1"/></svg>
<svg class="a" style="left:955.1px;top:162.6px" width="7" height="9"><path d="M0.8 0.6 L5.6 3.9 L0.8 7.2" stroke="#f0f0f0" stroke-width="1.1" fill="none"/></svg>
<div class="a t" style="left:766.6px;top:159px;color:#f4f4f4;font-size:11px;line-height:16px;letter-spacing:-0.29px;">Stgnr.Stg.</div>
<svg class="a" style="left:0;top:0" width="973" height="611" viewBox="0 0 973 611"><rect x="843.95" y="180.05" width="102.10" height="17.70" fill="#2a2a2c" stroke="#707072" stroke-width="1.5"/></svg>
<div class="a t" style="left:848.7px;top:181px;color:#f4f4f4;font-size:11px;line-height:16px;letter-spacing:-0.344px;">550845</div>
<svg class="a" style="left:0;top:0" width="973" height="611" viewBox="0 0 973 611"><rect x="948.95" y="179.85" width="18.30" height="18.10" fill="#2a2a2c" stroke="#707072" stroke-width="1.1"/></svg>
<svg class="a" style="left:955.1px;top:185.6px" width="7" height="9"><path d="M0.8 0.6 L5.6 3.9 L0.8 7.2" stroke="#f0f0f0" stroke-width="1.1" fill="none"/></svg>
<div class="a t" style="left:766.6px;top:183px;color:#f4f4f4;font-size:11px;line-height:16px;letter-spacing:-0.26px;">Softwarestand:</div>
<svg class="a" style="left:0;top:0" width="973" height="611" viewBox="0 0 973 611"><rect x="843.95" y="203.05" width="102.10" height="17.70" fill="#2a2a2c" stroke="#707072" stroke-width="1.5"/></svg>
<div class="a t" style="left:848.7px;top:204px;color:#f4f4f4;font-size:11px;line-height:16px;letter-spacing:-0.261px;">8348</div>
<svg class="a" style="left:0;top:0" width="973" height="611" viewBox="0 0 973 611"><rect x="948.95" y="202.85" width="18.30" height="18.10" fill="#2a2a2c" stroke="#707072" stroke-width="1.1"/></svg>
<svg class="a" style="left:955.1px;top:208.6px" width="7" height="9"><path d="M0.8 0.6 L5.6 3.9 L0.8 7.2" stroke="#f0f0f0" stroke-width="1.1" fill="none"/></svg>
<div class="a t" style="left:781.2px;top:205px;color:#f4f4f4;font-size:11px;line-height:16px;letter-spacing:-0.337px;">+ Version:</div>
<svg class="a" style="left:0;top:0" width="973" height="611" viewBox="0 0 973 611"><rect x="843.95" y="226.05" width="102.10" height="17.70" fill="#2a2a2c" stroke="#707072" stroke-width="1.5"/></svg>
<svg class="a" style="left:0;top:0" width="973" height="611" viewBox="0 0 973 611"><rect x="948.95" y="225.85" width="18.30" height="18.10" fill="#2a2a2c" stroke="#707072" stroke-width="1.1"/></svg>
<svg class="a" style="left:955.1px;top:231.6px" width="7" height="9"><path d="M0.8 0.6 L5.6 3.9 L0.8 7.2" stroke="#f0f0f0" stroke-width="1.1" fill="none"/></svg>
<div class="a t" style="left:766.6px;top:229px;color:#76ea76;font-size:11px;line-height:16px;letter-spacing:-0.26px;">Benutzer 11:</div>
<div class="a t" style="left:766.2px;top:247px;color:#f4f4f4;font-size:11px;line-height:16px;letter-spacing:-0.36px;">Checksumme:</div>
<div class="a t" style="left:766.6px;top:270px;color:#f4f4f4;font-size:11px;line-height:16px;transform:scaleX(0.917);transform-origin:0 0;">Prozessor:</div>
<div class="a t" style="left:845.5px;top:270px;color:#f4f4f4;font-size:11px;line-height:16px;letter-spacing:0.018px;">nicht erkannt</div>
<div class="a" style="left:742px;top:318.7px;width:17.3px;height:181.3px;background:#0c2a7a;"></div>
<div class="a t" style="left:750.65px;top:409.35px;width:0;height:0;"><div class="a" style="transform:translate(-50%,-50%) rotate(-90deg);color:#f4f4f4;font-size:11px;line-height:12px;letter-spacing:-0.05px;left:0.6px;top:0">Motor</div></div>
<svg class="a" style="left:0;top:0" width="973" height="611" viewBox="0 0 973 611"><rect x="843.95" y="320.15" width="102.10" height="17.70" fill="#2a2a2c" stroke="#707072" stroke-width="1.5"/></svg>
<div class="a t" style="left:846.2px;top:321px;color:#6e6e70;font-size:11px;line-height:16px;letter-spacing:-0.139px;max-width:99.0px;overflow:hidden;">z.B. Deutz</div>
<svg class="a" style="left:0;top:0" width="973" height="611" viewBox="0 0 973 611"><rect x="948.95" y="319.95" width="18.30" height="18.10" fill="#2a2a2c" stroke="#707072" stroke-width="1.1"/></svg>
<svg class="a" style="left:955.1px;top:325.7px" width="7" height="9"><path d="M0.8 0.6 L5.6 3.9 L0.8 7.2" stroke="#f0f0f0" stroke-width="1.1" fill="none"/></svg>
<div class="a t" style="left:766.6px;top:323px;color:#f4f4f4;font-size:11px;line-height:16px;letter-spacing:-0.412px;">Hersteller:</div>
<svg class="a" style="left:0;top:0" width="973" height="611" viewBox="0 0 973 611"><rect x="843.95" y="343.15" width="102.10" height="17.70" fill="#2a2a2c" stroke="#707072" stroke-width="1.5"/></svg>
<div class="a t" style="left:846.2px;top:344px;color:#6e6e70;font-size:11px;line-height:16px;letter-spacing:-0.338px;max-width:99.0px;overflow:hidden;">z.B. Z19DTH</div>
<div class="a t" style="left:766.6px;top:345px;color:#f4f4f4;font-size:11px;line-height:16px;letter-spacing:-0.259px;">Motorcode:</div>
<svg class="a" style="left:0;top:0" width="973" height="611" viewBox="0 0 973 611"><rect x="843.95" y="366.15" width="102.10" height="17.70" fill="#2a2a2c" stroke="#707072" stroke-width="1.5"/></svg>
<div class="a t" style="left:848.7px;top:367px;color:#f4f4f4;font-size:11px;line-height:16px;letter-spacing:-0.278px;">Turbo-Diesel</div>
<svg class="a" style="left:0;top:0" width="973" height="611" viewBox="0 0 973 611"><rect x="948.95" y="365.95" width="18.30" height="18.10" fill="#2a2a2c" stroke="#707072" stroke-width="1.1"/></svg>
<svg class="a" style="left:955.1px;top:371.7px" width="7" height="9"><path d="M0.8 0.6 L5.6 3.9 L0.8 7.2" stroke="#f0f0f0" stroke-width="1.1" fill="none"/></svg>
<div class="a t" style="left:766.6px;top:368px;color:#f4f4f4;font-size:11px;line-height:16px;transform:scaleX(0.917);transform-origin:0 0;">Art:</div>
<svg class="a" style="left:0;top:0" width="973" height="611" viewBox="0 0 973 611"><rect x="843.95" y="389.15" width="102.10" height="17.70" fill="#2a2a2c" stroke="#707072" stroke-width="1.5"/></svg>
<div class="a t" style="left:848.7px;top:390px;color:#f4f4f4;font-size:11px;line-height:16px;letter-spacing:-0.148px;">2.0</div>
<div class="a t" style="left:766.6px;top:392px;color:#f4f4f4;font-size:11px;line-height:16px;transform:scaleX(0.932);transform-origin:0 0;">Hubraum:</div>
<svg class="a" style="left:0;top:0" width="973" height="611" viewBox="0 0 973 611"><rect x="843.95" y="412.15" width="39.10" height="17.70" fill="#2a2a2c" stroke="#707072" stroke-width="1.5"/></svg>
<div class="a t" style="left:850px;top:413px;color:#f4f4f4;font-size:11px;line-height:16px;letter-spacing:-0.208px;">150.0</div>
<svg class="a" style="left:0;top:0" width="973" height="611" viewBox="0 0 973 611"><rect x="906.95" y="412.15" width="39.10" height="17.70" fill="#2a2a2c" stroke="#707072" stroke-width="1.5"/></svg>
<div class="a t" style="left:913.2px;top:413px;color:#f4f4f4;font-size:11px;line-height:16px;letter-spacing:-0.005px;">110.3</div>
<div class="a t" style="left:886.7px;top:415px;color:#f4f4f4;font-size:12px;line-height:16px;transform:scaleX(0.824);transform-origin:0 0;">PS</div>
<div class="a t" style="left:948px;top:415px;color:#f4f4f4;font-size:12px;line-height:16px;letter-spacing:-0.328px;">kW</div>
<div class="a t" style="left:766.6px;top:415px;color:#76ea76;font-size:11px;line-height:16px;letter-spacing:-0.332px;">Leistung:</div>
<svg class="a" style="left:0;top:0" width="973" height="611" viewBox="0 0 973 611"><rect x="843.95" y="435.15" width="102.10" height="17.70" fill="#2a2a2c" stroke="#707072" stroke-width="1.5"/></svg>
<div class="a t" style="left:766.6px;top:437px;color:#f4f4f4;font-size:11px;line-height:16px;transform:scaleX(0.927);transform-origin:0 0;">Max. Drehmom.</div>
<svg class="a" style="left:0;top:0" width="973" height="611" viewBox="0 0 973 611"><rect x="843.95" y="458.15" width="102.10" height="17.70" fill="#2a2a2c" stroke="#707072" stroke-width="1.5"/></svg>
<div class="a t" style="left:846.2px;top:459px;color:#6e6e70;font-size:11px;line-height:16px;letter-spacing:-0.122px;max-width:99.0px;overflow:hidden;">z.B. Euro 5</div>
<svg class="a" style="left:0;top:0" width="973" height="611" viewBox="0 0 973 611"><rect x="948.95" y="457.95" width="18.30" height="18.10" fill="#2a2a2c" stroke="#707072" stroke-width="1.1"/></svg>
<svg class="a" style="left:955.1px;top:463.7px" width="7" height="9"><path d="M0.8 0.6 L5.6 3.9 L0.8 7.2" stroke="#f0f0f0" stroke-width="1.1" fill="none"/></svg>
<div class="a t" style="left:766.6px;top:460px;color:#f4f4f4;font-size:11px;line-height:16px;transform:scaleX(0.927);transform-origin:0 0;">Abgasnorm:</div>
<svg class="a" style="left:0;top:0" width="973" height="611" viewBox="0 0 973 611"><rect x="843.95" y="481.15" width="102.10" height="17.70" fill="#2a2a2c" stroke="#707072" stroke-width="1.5"/></svg>
<div class="a t" style="left:846.2px;top:482px;color:#6e6e70;font-size:11px;line-height:16px;letter-spacing:-0.091px;max-width:99.0px;overflow:hidden;">z.B. Schaltgetriebe</div>
<svg class="a" style="left:0;top:0" width="973" height="611" viewBox="0 0 973 611"><rect x="948.95" y="480.95" width="18.30" height="18.10" fill="#2a2a2c" stroke="#707072" stroke-width="1.1"/></svg>
<svg class="a" style="left:955.1px;top:486.7px" width="7" height="9"><path d="M0.8 0.6 L5.6 3.9 L0.8 7.2" stroke="#f0f0f0" stroke-width="1.1" fill="none"/></svg>
<div class="a t" style="left:766.6px;top:484px;color:#f4f4f4;font-size:11px;line-height:16px;letter-spacing:-0.344px;">Getriebe:</div>
<div class="a t" style="left:951.7px;top:392px;color:#f4f4f4;font-size:12px;line-height:16px;letter-spacing:-0.2px;">L</div>
<div class="a t" style="left:948.7px;top:437px;color:#f4f4f4;font-size:12px;line-height:16px;transform:scaleX(0.803);transform-origin:0 0;">Nm</div>
<div class="a" style="left:483.7px;top:540px;width:129.5px;height:23px;background:#2a2a2c;border:1px solid #1e90dc;box-sizing:border-box;"></div>
<div class="a t" style="left:540.5px;top:544px;color:#f4f4f4;font-size:11px;line-height:16px;transform:scaleX(0.943);transform-origin:0 0;">OK</div>
<div class="a" style="left:622px;top:540px;width:129.3px;height:22.7px;background:#8e1418;border:1px solid #b82a2c;box-sizing:border-box;"></div>
<div class="a t" style="left:632px;top:544px;color:#f6e4e4;font-size:11px;line-height:16px;letter-spacing:-0.212px;">Fahrzeugdaten suchen</div>
<svg class="a" style="left:0;top:0" width="973" height="611" viewBox="0 0 973 611"><rect x="751.35" y="540.65" width="23.10" height="21.50" fill="#2a2a2c" stroke="#727274" stroke-width="1.1"/><rect x="783.75" y="540.65" width="25.70" height="21.50" fill="#2a2a2c" stroke="#727274" stroke-width="1.1"/><rect x="816.75" y="540.65" width="25.70" height="21.50" fill="#2a2a2c" stroke="#727274" stroke-width="1.1"/><rect x="849.75" y="540.65" width="25.90" height="21.50" fill="#2a2a2c" stroke="#727274" stroke-width="1.1"/><rect x="876.75" y="540.65" width="22.70" height="21.50" fill="#2a2a2c" stroke="#1a7ad0" stroke-width="1.1"/><rect x="906.75" y="540.65" width="25.70" height="21.50" fill="#2a2a2c" stroke="#727274" stroke-width="1.1"/><rect x="942.55" y="540.65" width="25.40" height="21.50" fill="#2a2a2c" stroke="#727274" stroke-width="1.1"/><rect x="969.95" y="540.65" width="8.90" height="21.50" fill="#2a2a2c" stroke="#727274" stroke-width="1.1"/></svg>
<svg class="a" style="left:0;top:0" width="973" height="611" viewBox="0 0 973 611"><defs><pattern id="dots" width="2" height="2" patternUnits="userSpaceOnUse"><rect width="2" height="2" fill="#e8dc40"/><rect width="1" height="1" fill="#b0b098"/><rect x="1" y="1" width="1" height="1" fill="#b0b098"/></pattern></defs><rect x="754.6" y="546.3" width="12.6" height="10" rx="0.8" fill="url(#dots)"/><ellipse cx="761.5" cy="547.4" rx="3.3" ry="1.2" fill="#d0d0cc"/><path d="M759.2 546.6 Q761.2 542.8 763.2 546.6" stroke="#f4ec20" stroke-width="1.2" fill="none"/><path d="M760 550.3 H766.8 L768.5 552 V557.2 H760 Z" fill="#ffffff" stroke="#3a7ae0" stroke-width="0.35"/><rect x="761.8" y="553" width="3.3" height="1" fill="#0a6edc"/><rect x="761.8" y="554.9" width="5.1" height="1" fill="#0a6edc"/><ellipse cx="796.1" cy="550.6" rx="7.9" ry="7.5" fill="#eef0f0"/><clipPath id="c796"><ellipse cx="796.1" cy="550.6" rx="7.0" ry="6.7"/></clipPath><g clip-path="url(#c796)"><rect x="788.1" y="542.6" width="16" height="16" fill="#14e8ec"/><path d="M788.1 543.6 L792.9 544.0 L793.7 547.1 L791.9 550.0 L792.7 553.0 L791.1 555.2 L788.1 555.6 Z" fill="#44cc38"/><path d="M797.3000000000001 542.6 L804.1 542.6 L804.1 551.6 L800.7 551.2 L797.7 547.6 Z" fill="#30d030"/><path d="M790.1 555.4 L793.6 554.8000000000001 L796.6 556.6 L799.1 558.6 L790.1 558.6 Z" fill="#f6f6f6"/><path d="M794.9 542.6 L797.3000000000001 542.6 L797.5 546.6 L795.3000000000001 545.6 Z" fill="#f6f6f6"/></g><path d="M797.5 547.6 H801 V552.3 H804.3 L799.4 558 L794.8 552.3 H797.5 Z" fill="#2a48f0" stroke="#1a1c50" stroke-width="0.5"/><ellipse cx="829.1" cy="550.6" rx="7.9" ry="7.5" fill="#eef0f0"/><clipPath id="c829"><ellipse cx="829.1" cy="550.6" rx="7.0" ry="6.7"/></clipPath><g clip-path="url(#c829)"><rect x="821.1" y="542.6" width="16" height="16" fill="#14e8ec"/><path d="M821.1 543.6 L825.9 544.0 L826.7 547.1 L824.9 550.0 L825.7 553.0 L824.1 555.2 L821.1 555.6 Z" fill="#44cc38"/><path d="M830.3000000000001 542.6 L837.1 542.6 L837.1 551.6 L833.7 551.2 L830.7 547.6 Z" fill="#30d030"/><path d="M823.1 555.4 L826.6 554.8000000000001 L829.6 556.6 L832.1 558.6 L823.1 558.6 Z" fill="#f6f6f6"/><path d="M827.9 542.6 L830.3000000000001 542.6 L830.5 546.6 L828.3000000000001 545.6 Z" fill="#f6f6f6"/></g><path d="M832.5 547.3 L837.5 553.8 H834.3 V558.1 H830.7 V553.8 H827.6 Z" fill="#f23e4a" stroke="#601418" stroke-width="0.4"/><rect x="855.6" y="545.2" width="13.4" height="7.8" rx="3.6" fill="#ffffff"/><path d="M862 552.4 H866.2 L864.6 556.4 L863.6 556.4 L864.3 553 Z" fill="#ffffff"/><path d="M887.4 549.3 L883 552.6 L887.4 555.9 M893.9 549.3 L889.5 552.6 L893.9 555.9" stroke="#dcdcdc" stroke-width="1.1" fill="none"/><path d="M949.2 543.4 H960.4 L962.1 545.2 V557.6 H949.2 Z" fill="#f2f2f2"/><rect x="954.5" y="546.2" width="6.6" height="0.9" fill="#a8b0c0"/><rect x="954.5" y="548.2" width="6.6" height="0.9" fill="#a8b0c0"/><rect x="954.5" y="550.2" width="6.6" height="0.9" fill="#a8b0c0"/><rect x="954.5" y="552.2" width="6.6" height="0.9" fill="#a8b0c0"/><rect x="954.5" y="554.2" width="6.6" height="0.9" fill="#a8b0c0"/><rect x="954.5" y="556" width="6.6" height="0.9" fill="#a8b0c0"/><circle cx="951.6" cy="551.4" r="3.6" fill="none" stroke="#7a98cc" stroke-width="1.6" stroke-dasharray="1.3 1"/><circle cx="951.6" cy="551.4" r="2.3" fill="#e8eef8" stroke="#7a98cc" stroke-width="0.9"/></svg>
<div class="a t" style="left:916.2px;top:544px;color:#f0f0f0;font-size:11.5px;line-height:16px;letter-spacing:-0.2px;transform:scaleX(0.88);transform-origin:0 0;">§</div>
</body></html>
